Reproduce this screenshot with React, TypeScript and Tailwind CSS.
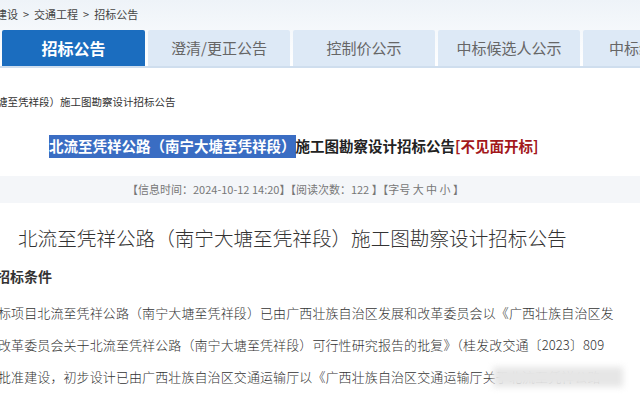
import React from "react";

const sans = { fontFamily: '"Noto Sans CJK SC", "Noto Sans", sans-serif' };

export default function App() {
  const tabs = ["澄清/更正公告", "控制价公示", "中标候选人公示", "中标结果公示"];
  return (
    <div className="w-[640px] h-[395px] overflow-hidden bg-white relative" style={sans}>
      {/* header area */}
      <div className="bg-gradient-to-b from-[#eef3f8] via-[#f6f9fc] to-white">
        <div className="h-[27px] flex items-center gap-[5px] text-[11px] text-[#444] -ml-[4px] pt-[2px] whitespace-nowrap">
          <span>建设</span>
          <span>&gt;</span>
          <span>交通工程</span>
          <span>&gt;</span>
          <span>招标公告</span>
        </div>
        <div className="flex gap-[3px] pl-[2px] pt-[3px] border-b-2 border-[#cfdeee] w-[700px]">
          <div className="w-[143px] h-[36px] shrink-0 rounded-t-[2px] bg-[#1b6dbf] text-white font-bold text-[16px] flex items-center justify-center">
            招标公告
          </div>
          {tabs.map((t) => (
            <div
              key={t}
              className="w-[142px] h-[36px] shrink-0 rounded-t-[2px] bg-[#dde9f6] text-[#666] text-[15px] flex items-center justify-center"
            >
              {t}
            </div>
          ))}
        </div>
      </div>

      <div className="mt-[24px] h-[20px] flex items-center text-[10.5px] text-[#333] -ml-[3px] whitespace-nowrap">
        塘至凭祥段）施工图勘察设计招标公告
      </div>

      <div className="mt-[22px] pl-[49px] flex items-center whitespace-nowrap font-bold text-[14.5px] h-[24px]">
        <span className="bg-[#3a6dc3] text-white h-[23px] flex items-center">北流至凭祥公路（南宁大塘至凭祥段）</span>
        <span className="text-[#222]">施工图勘察设计招标公告</span>
        <span className="text-[#a3181c]">[不见面开标]</span>
      </div>

      <div className="mt-[18px] h-[27px] bg-[#f4f6f9] flex items-center pl-[127px] text-[11px] text-[#777] whitespace-nowrap">
        【信息时间：2024-10-12 14:20】【阅读次数：122 】【字号 大 中 小 】
      </div>

      <div className="mt-[22px] pl-[18px] text-[19.6px] text-[#333] whitespace-nowrap font-light h-[26px] flex items-center">
        北流至凭祥公路（南宁大塘至凭祥段）施工图勘察设计招标公告
      </div>

      <div className="mt-[15px] -ml-[4px] text-[14px] font-bold text-[#333] h-[20px] flex items-center">
        招标条件
      </div>

      <div className="mt-[11px] -ml-[2px] text-[13px] tracking-[0.1px] text-[#333] font-light leading-[32px] whitespace-nowrap">
        <div>标项目北流至凭祥公路（南宁大塘至凭祥段）已由广西壮族自治区发展和改革委员会以《广西壮族自治区发</div>
        <div>改革委员会关于北流至凭祥公路（南宁大塘至凭祥段）可行性研究报告的批复》（桂发改交通〔2023〕809</div>
        <div className="relative">
          批准建设，初步设计已由广西壮族自治区交通运输厅以《广西壮族自治区交通运输厅关于北流至凭祥公路
          <div className="absolute left-[495px] top-[6px] w-[130px] h-[20px] bg-[#e6e6e6] blur-[3px]" />
        </div>
      </div>
    </div>
  );
}
